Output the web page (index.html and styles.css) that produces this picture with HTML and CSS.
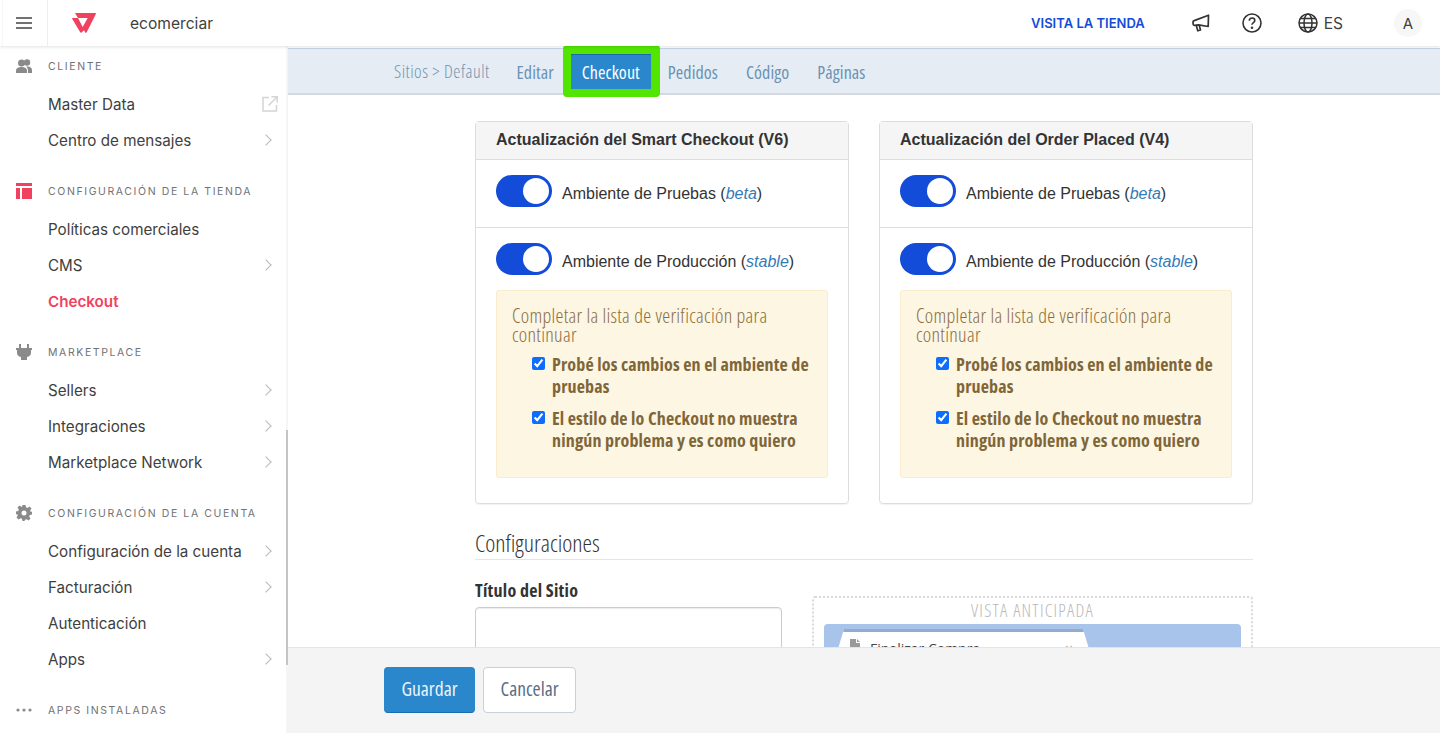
FILE: index.html
```html
<!DOCTYPE html>
<html lang="es">
<head>
    <meta charset="UTF-8">
    <meta name="viewport" content="width=device-width, initial-scale=1.0">
    <title>Checkout</title>
    <link rel="stylesheet" href="styles.css">
</head>
<body>
    <header class="topbar">
        <button class="menu-button" aria-label="Menu">
            <svg width="16" height="12" viewBox="0 0 16 12"><path d="M0 1h16M0 6h16M0 11h16" stroke="#444" stroke-width="1.6"/></svg>
        </button>
        <svg class="logo" width="24" height="20" viewBox="0 0 24 20"><path fill="#f0415f" fill-rule="evenodd" d="M3 0h20.300c.6 0 .9.5.6 1L14.700 19.200c-.4.8-1.200.8-1.600.1L12 17.300l-2.400 2.200c-.5.500-1.100.3-1.400-.2L.2 5.800C0 5.300.2 5 .7 5H6L3 0zM6 5l4.700 9L15.700 5H6z"/></svg>
        <span class="account">ecomerciar</span>
        <a class="visit" href="#">VISITA LA TIENDA</a>
        <svg class="top-icon megaphone" width="18" height="18" viewBox="0 0 18 18" fill="none" stroke="#333" stroke-width="1.700" stroke-linejoin="round"><path d="M16.500 1.200l-.3 11.300L6.500 10.800l-3.700.6c-.9.100-1.500-.3-1.600-1.200L1 8.300c-.1-.9.300-1.500 1.200-1.700L16.500 1.200z"/><path d="M4.200 11.200l1.600 5.600 2.700-.9-1.300-4.700"/></svg>
        <svg class="top-icon help" width="20" height="20" viewBox="0 0 20 20" fill="none" stroke="#333" stroke-width="1.600"><circle cx="10" cy="10" r="9"/><path d="M7.300 7.700c0-1.600 1.200-2.700 2.800-2.700 1.500 0 2.700 1 2.700 2.400 0 2.200-2.800 2.200-2.800 4.400"/><circle cx="10" cy="14.700" r=".5" fill="#333"/></svg>
        <svg class="top-icon globe" width="20" height="20" viewBox="0 0 20 20" fill="none" stroke="#333" stroke-width="1.500"><circle cx="10" cy="10" r="9"/><ellipse cx="10" cy="10" rx="4" ry="9"/><path d="M1 10h18M2.300 5.500h15.400M2.300 14.500h15.400"/></svg>
        <span class="lang">ES</span>
        <span class="avatar">A</span>
    </header>

    <div class="layout">
        <nav class="sidebar">
            <section class="side-section">
                <h4 class="side-title">
                    <svg width="16" height="14" viewBox="0 0 16 14" fill="#8a8a8a"><circle cx="5.500" cy="4" r="3.500"/><circle cx="11" cy="3.500" r="3.200"/><path d="M0 14v-2.500C0 9.500 2 8 5.500 8S11 9.500 11 11.500V14H0zM12 14v-2.800c0-1.500-.8-2.600-1.800-3.500 3.300-.5 5.800.9 5.800 3.300v3h-4z"/></svg>
                    CLIENTE
                </h4>
                <a class="side-link" href="#">Master Data
                    <svg class="external" width="16" height="16" viewBox="0 0 16 16" fill="none" stroke="#d4d4d4" stroke-width="1.500"><path d="M7 1.500H1v13.500h13.500V9M9.500 .8h5.700v5.700M15 1L6.500 9.500"/></svg>
                </a>
                <a class="side-link has-arrow" href="#">Centro de mensajes</a>
            </section>
            <section class="side-section">
                <h4 class="side-title">
                    <svg width="16" height="16" viewBox="0 0 16 16" fill="#f0415f"><path d="M0 0h16v3H0zM0 5h4v11H0zM6 5h10v11H6z"/></svg>
                    CONFIGURACIÓN DE LA TIENDA
                </h4>
                <a class="side-link" href="#">Políticas comerciales</a>
                <a class="side-link has-arrow" href="#">CMS</a>
                <a class="side-link active" href="#">Checkout</a>
            </section>
            <section class="side-section">
                <h4 class="side-title">
                    <svg width="16" height="16" viewBox="0 0 16 16" fill="#8a8a8a"><path d="M3 0h2v4h6V0h2v4h3v2h-1v3c0 2-1.500 3.500-4 4v3H5v-3c-2.500-.5-4-2-4-4V6H0V4h3z"/></svg>
                    MARKETPLACE
                </h4>
                <a class="side-link has-arrow" href="#">Sellers</a>
                <a class="side-link has-arrow" href="#">Integraciones</a>
                <a class="side-link has-arrow" href="#">Marketplace Network</a>
            </section>
            <section class="side-section">
                <h4 class="side-title">
                    <svg width="16" height="16" viewBox="0 0 16 16" fill="#8a8a8a"><path fill-rule="evenodd" d="M6.500 0h3l.5 2.300 1.500.6 2-1.300 2 2-1.300 2 .6 1.500L16 6.500v3l-2.200.5-.6 1.500 1.300 2-2 2-2-1.300-1.500.6L8.500 16h-2l-.5-2.200-1.500-.6-2 1.300-2-2 1.300-2-.6-1.500L0 9.500v-3l2.200-.5.6-1.500-1.300-2 2-2 2 1.300L6 2.300zM8 5.500a2.500 2.500 0 1 0 0 5 2.500 2.500 0 0 0 0-5z"/></svg>
                    CONFIGURACIÓN DE LA CUENTA
                </h4>
                <a class="side-link has-arrow" href="#">Configuración de la cuenta</a>
                <a class="side-link has-arrow" href="#">Facturación</a>
                <a class="side-link" href="#">Autenticación</a>
                <a class="side-link has-arrow" href="#">Apps</a>
            </section>
            <section class="side-section">
                <h4 class="side-title">
                    <svg width="16" height="4" viewBox="0 0 16 4" fill="#8a8a8a"><circle cx="2" cy="2" r="1.600"/><circle cx="8" cy="2" r="1.600"/><circle cx="14" cy="2" r="1.600"/></svg>
                    APPS INSTALADAS
                </h4>
            </section>
            <div class="side-scroll"></div>
        </nav>

        <main class="main">
            <div class="subnav">
                <span class="crumb">Sitios &gt; Default</span>
                <a class="tab" href="#">Editar</a>
                <a class="tab selected" href="#">Checkout</a>
                <a class="tab" href="#">Pedidos</a>
                <a class="tab" href="#">Código</a>
                <a class="tab" href="#">Páginas</a>
            </div>

            <div class="content">
                <div class="container">
                    <div class="cards">
                        <div class="card">
                            <h3 class="card-title">Actualización del Smart Checkout (V6)</h3>
                            <div class="card-row">
                                <span class="toggle"></span>
                                <span>Ambiente de Pruebas (<em>beta</em>)</span>
                            </div>
                            <div class="card-row open">
                                <span class="toggle"></span>
                                <span>Ambiente de Producción (<em>stable</em>)</span>
                            </div>
                            <div class="notice">
                                <p class="notice-title">Completar la lista de verificación para continuar</p>
                                <label class="check"><input type="checkbox" checked>Probé los cambios en el ambiente de pruebas</label>
                                <label class="check"><input type="checkbox" checked>El estilo de lo Checkout no muestra ningún problema y es como quiero</label>
                            </div>
                        </div>
                        <div class="card">
                            <h3 class="card-title">Actualización del Order Placed (V4)</h3>
                            <div class="card-row">
                                <span class="toggle"></span>
                                <span>Ambiente de Pruebas (<em>beta</em>)</span>
                            </div>
                            <div class="card-row open">
                                <span class="toggle"></span>
                                <span>Ambiente de Producción (<em>stable</em>)</span>
                            </div>
                            <div class="notice">
                                <p class="notice-title">Completar la lista de verificación para continuar</p>
                                <label class="check"><input type="checkbox" checked>Probé los cambios en el ambiente de pruebas</label>
                                <label class="check"><input type="checkbox" checked>El estilo de lo Checkout no muestra ningún problema y es como quiero</label>
                            </div>
                        </div>
                    </div>

                    <h2 class="settings-title">Configuraciones</h2>

                    <div class="settings">
                        <div class="field">
                            <label class="field-label">Título del Sitio</label>
                            <input class="field-input" type="text">
                        </div>
                        <div class="preview">
                            <div class="preview-label">VISTA ANTICIPADA</div>
                            <div class="browser">
                                <div class="browser-tab">
                                    <svg width="10" height="13" viewBox="0 0 10 13" fill="#9a9a9a"><path d="M0 0h6v4h4v9H0zM7 0l3 3H7z"/></svg>
                                    Finalizar Compra
                                    <span class="tab-close">×</span>
                                </div>
                            </div>
                        </div>
                    </div>
                </div>
            </div>

            <footer class="actions">
                <button class="btn primary">Guardar</button>
                <button class="btn">Cancelar</button>
            </footer>
        </main>
    </div>
</body>
</html>
```

FILE: styles.css
```css
* {
    box-sizing: border-box;
}

html, body {
    height: 100%;
}

body {
    margin: 0;
    font-family: 'Liberation Sans', Arial, sans-serif;
    color: #333333;
    background-color: #ffffff;
    overflow: hidden;
    display: flex;
    flex-direction: column;
}

a {
    text-decoration: none;
}

/* Top bar */
.topbar {
    height: 46px;
    flex: none;
    display: flex;
    align-items: center;
    background-color: #ffffff;
    box-shadow: 0 1px 3px rgba(0, 0, 0, 0.12);
    position: relative;
    z-index: 3;
}

.menu-button {
    width: 46px;
    height: 46px;
    margin-left: 2px;
    border: none;
    border-left: 1px solid #f6f6f6;
    border-right: 1px solid #eeeeee;
    background: #ffffff;
    padding: 0 0 0 13px;
    display: flex;
    align-items: center;
}

.logo {
    margin-left: 24px;
}

.account {
    margin-left: 34px;
    font-family: Inter, sans-serif;
    font-size: 15.600px;
    color: #3f3f40;
}

.visit {
    margin-left: auto;
    font-family: Inter, sans-serif;
    font-size: 13px;
    font-weight: 600;
    color: #134cd8;
}

.megaphone {
    margin-left: 47px;
}

.help {
    margin-left: 32px;
}

.globe {
    margin-left: 36px;
}

.lang {
    margin-left: 6px;
    font-family: Inter, sans-serif;
    font-size: 15.500px;
    color: #3f3f40;
}

.avatar {
    width: 28px;
    height: 28px;
    margin-left: 51px;
    margin-right: 18px;
    border-radius: 50%;
    background-color: #f7f7f8;
    display: flex;
    align-items: center;
    justify-content: center;
    font-family: Inter, sans-serif;
    font-size: 15px;
    color: #3f3f40;
}

/* Page body */
.layout {
    flex: 1;
    min-height: 0;
    display: flex;
}

/* Sidebar */
.sidebar {
    width: 288px;
    flex: none;
    padding-top: 10px;
    overflow: hidden;
    position: relative;
    font-family: Inter, sans-serif;
}

.side-section {
    margin-bottom: 23px;
}

.side-title {
    height: 20px;
    margin: 0 0 10px;
    padding-left: 16px;
    display: flex;
    align-items: center;
    font-size: 10.500px;
    font-weight: 400;
    letter-spacing: 1.600px;
    color: #727273;
}

.side-title svg {
    width: 16px;
    margin-right: 16px;
    flex: none;
}

.side-link {
    height: 36px;
    padding-left: 48px;
    padding-right: 18px;
    display: flex;
    align-items: center;
    justify-content: space-between;
    font-size: 15.200px;
    color: #3f3f40;
}

.side-link.active {
    color: #f0415f;
    font-weight: 600;
}

.side-link.has-arrow::after {
    content: "";
    width: 7px;
    height: 7px;
    border-top: 1px solid #b9b9b9;
    border-right: 1px solid #b9b9b9;
    transform: rotate(45deg);
}

.external {
    margin-right: -8px;
}

/* scrollbar track and thumb */
.side-scroll {
    position: absolute;
    top: 0;
    bottom: 0;
    right: 0;
    width: 2px;
    background-color: #f5f5f5;
}

.side-scroll::after {
    content: "";
    position: absolute;
    top: 384px;
    left: 0;
    width: 2px;
    height: 235px;
    background-color: #c4c4c4;
}

/* Main column */
.main {
    flex: 1;
    min-width: 0;
    display: flex;
    flex-direction: column;
    font-family: 'Open Sans', sans-serif;
    font-stretch: 75%;
}

.subnav {
    height: 47px;
    margin-top: 2px;
    flex: none;
    padding-left: 106px;
    display: flex;
    align-items: center;
    gap: 6px;
    background-color: #e6ecf3;
    border-top: 1px solid #c5d5e6;
    border-bottom: 2px solid #d3d9df;
    font-size: 18px;
    letter-spacing: 0.100px;
}

.crumb {
    margin-right: 10px;
    font-weight: 300;
    letter-spacing: 0.500px;
    color: #6f95b5;
}

.tab {
    height: 35px;
    padding: 1px 11px 0;
    display: flex;
    align-items: center;
    color: #6a92b3;
    position: relative;
}

.tab.selected {
    background-color: #2a87cb;
    color: #ffffff;
    box-shadow: inset 0 1px 0 #1d6aa5;
}

/* green highlight drawn around the selected tab */
.tab.selected::before {
    content: "";
    position: absolute;
    top: -9px;
    left: -8px;
    right: -9px;
    bottom: -8px;
    border-style: solid;
    border-color: #52e500;
    border-width: 9px 9px 8px 8px;
    border-radius: 4px;
}

.content {
    flex: 1;
    min-height: 0;
    overflow: hidden;
}

.container {
    width: 778px;
    margin: 0 auto;
    padding-top: 26px;
}

.cards {
    display: flex;
    gap: 30px;
}

/* Toggle cards */
.card {
    width: 374px;
    height: 383px;
    border: 1px solid #dddddd;
    border-radius: 4px;
    box-shadow: 0 1px 1px rgba(0, 0, 0, 0.05);
}

.card-title {
    height: 38px;
    margin: 0;
    padding: 0 0 2px 20px;
    display: flex;
    align-items: center;
    background-color: #f5f5f5;
    border-bottom: 1px solid #dddddd;
    font-family: 'Liberation Sans', Arial, sans-serif;
    font-size: 16px;
    font-weight: 700;
    color: #333333;
}

.card-row {
    height: 68px;
    padding: 15px 20px 0;
    display: flex;
    gap: 10px;
    align-items: flex-start;
    border-bottom: 1px solid #dddddd;
    font-family: 'Liberation Sans', Arial, sans-serif;
    font-size: 16px;
    line-height: 38px;
}

.card-row.open {
    height: 62px;
    border-bottom: none;
}

.card-row em {
    color: #337ab7;
}

.toggle {
    width: 56px;
    height: 32px;
    flex: none;
    border-radius: 16px;
    background-color: #134cd8;
    position: relative;
}

.toggle::after {
    content: "";
    position: absolute;
    top: 3px;
    right: 3px;
    width: 26px;
    height: 26px;
    border-radius: 50%;
    background-color: #ffffff;
}

.notice {
    margin: 0 20px;
    height: 188px;
    padding: 15px;
    background-color: #fdf6e3;
    border: 1px solid #faebcc;
    border-radius: 3px;
    color: #8a6d3b;
}

.notice-title {
    margin: 0 0 9px;
    padding-right: 30px;
    font-size: 20px;
    font-weight: 300;
    letter-spacing: 0.300px;
    line-height: 19px;
}

.check {
    display: block;
    position: relative;
    margin: 0 0 10px 40px;
    font-size: 18px;
    font-weight: 700;
    letter-spacing: 0.150px;
    line-height: 22px;
    color: #7f6639;
}

.check input {
    position: absolute;
    left: -20px;
    top: 4px;
    width: 13px;
    height: 13px;
    margin: 0;
    accent-color: #0d6efd;
}

/* Settings */
.settings-title {
    margin: 25px 0 0;
    height: 31px;
    border-bottom: 1px solid #e5e5e5;
    font-size: 24px;
    font-weight: 300;
    line-height: 28px;
    color: #333333;
}

.settings {
    margin-top: 19px;
    display: flex;
    gap: 30px;
}

.field {
    width: 307px;
}

.field-label {
    display: block;
    font-size: 18px;
    font-weight: 700;
    letter-spacing: 0.250px;
    line-height: 22px;
    margin-bottom: 6px;
}

.field-input {
    display: block;
    width: 100%;
    height: 80px;
    border: 1px solid #cccccc;
    border-radius: 4px;
    box-shadow: inset 0 1px 1px rgba(0, 0, 0, 0.075);
}

.preview {
    width: 441px;
    height: 140px;
    margin-top: 17px;
    padding: 0 10px;
    border: 2px dotted #d9d9d9;
    border-radius: 3px;
}

.preview-label {
    height: 26px;
    text-align: center;
    font-size: 18px;
    font-weight: 300;
    letter-spacing: 1.200px;
    line-height: 24px;
    color: #b9b9b9;
}

.browser {
    height: 100px;
    padding: 5px 0 0 14px;
    background-color: #a8c4ea;
    border-radius: 4px;
}

.browser-tab {
    width: 251px;
    height: 20px;
    padding: 3px 16px 0 12px;
    display: flex;
    align-items: flex-start;
    gap: 10px;
    background-color: #ffffff;
    border-top: 3px solid #93abcf;
    font-family: 'Open Sans', sans-serif;
    font-stretch: 100%;
    font-size: 14px;
    line-height: 28px;
    color: #444444;
    clip-path: polygon(6px 0, calc(100% - 6px) 0, 100% 100%, 0 100%);
}

.browser-tab svg {
    margin-top: 4px;
}

.tab-close {
    margin-left: auto;
    color: #aaaaaa;
}

/* Bottom actions */
.actions {
    height: 86px;
    flex: none;
    padding: 19px 0 0 96px;
    display: flex;
    align-items: flex-start;
    gap: 8px;
    background-color: #f4f4f4;
    border-top: 1px solid #e3e4e6;
    position: relative;
    z-index: 1;
}

.btn {
    height: 46px;
    padding: 0 16.500px 3px;
    border: 1px solid #c8d0dc;
    border-radius: 4px;
    background-color: #ffffff;
    font-family: 'Open Sans', sans-serif;
    font-stretch: 75%;
    font-size: 19.500px;
    color: #5a6f87;
}

.btn.primary {
    background-color: #2a87cb;
    border-color: #2a87cb;
    border-bottom-color: #1a6db0;
    color: #e9f4fb;
}
```
